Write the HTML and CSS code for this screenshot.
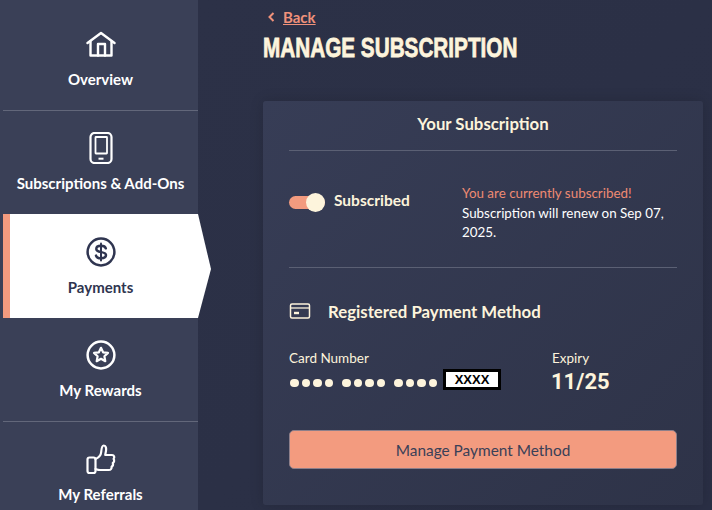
FILE: index.html
```html
<!DOCTYPE html>
<html lang="en">
<head>
    <meta charset="UTF-8">
    <meta name="viewport" content="width=device-width, initial-scale=1.0">
    <title>Manage Subscription</title>
    <link rel="stylesheet" href="styles.css">
</head>
<body>
    <div class="page">
        <nav class="sidebar">
            <a class="nav-item">
                <svg class="nav-icon" viewBox="0 0 30 32" fill="none" stroke="currentColor" stroke-width="2.400" stroke-linejoin="round" stroke-linecap="round">
                    <path d="M1.500 15 15 5l13.500 10"/>
                    <path d="M4.500 13.500V27.500H25.500V13.500"/>
                    <path d="M12 27.500V16H19V27.500"/>
                </svg>
                <span>Overview</span>
            </a>
            <a class="nav-item">
                <svg class="nav-icon" viewBox="0 0 30 32" fill="none" stroke="currentColor" stroke-width="2.200">
                    <rect x="4.500" y="1" width="21" height="30" rx="4"/>
                    <rect x="9.500" y="5" width="11.500" height="16.500" rx="0.500" stroke-width="1.800"/>
                    <path d="M12.500 26.700h5" stroke-width="2"/>
                </svg>
                <span>Subscriptions &amp; Add-Ons</span>
            </a>
            <a class="nav-item nav-item-active">
                <svg class="nav-icon" viewBox="0 0 30 32" fill="none" stroke="currentColor" stroke-width="2.500" stroke-linecap="round">
                    <circle cx="15" cy="16" r="13.400"/>
                    <path d="M19.800 12.300C19.300 10.600 17.300 9.800 15 9.800c-2.700 0-4.700 1.200-4.700 3.200 0 4.500 9.700 1.800 9.700 6.100 0 2-2.100 3.200-4.900 3.200-2.500 0-4.600-.9-5.100-2.700"/>
                    <path d="M15 7.500v17" stroke-width="2"/>
                </svg>
                <span>Payments</span>
            </a>
            <a class="nav-item">
                <svg class="nav-icon" viewBox="0 0 30 32" fill="none" stroke="currentColor" stroke-width="2.500" stroke-linejoin="round">
                    <circle cx="15" cy="16" r="13.400"/>
                    <path d="m15 8.800 2.100 4.500 4.900.6-3.600 3.400.9 4.900-4.300-2.400-4.300 2.400.9-4.900-3.600-3.400 4.900-.6z" stroke-width="2.200"/>
                </svg>
                <span>My Rewards</span>
            </a>
            <a class="nav-item">
                <svg class="nav-icon" viewBox="0 0 30 32" fill="none" stroke="currentColor" stroke-width="2.200" stroke-linejoin="round" stroke-linecap="round">
                    <rect x="1.500" y="14.500" width="8" height="15.500" rx="2"/>
                    <path d="M9.500 16c3.400-1.400 5.400-3.800 5.700-7 .2-2.200.4-6.500 2.600-6.500 2.300 0 2.600 3.200 2.200 5.400l-.8 4.100h6.800c2.300 0 2.800 2.400 1.600 3.900 1 1.400.6 3.400-.8 4.100.5 1.500 0 3-1.200 3.700.3 2-.9 3.300-2.800 3.300H14c-1.800 0-3-.5-4.500-1"/>
                </svg>
                <span>My Referrals</span>
            </a>
        </nav>

        <main class="content">
            <a class="back-link">
                <svg class="back-arrow" viewBox="0 0 7 10" fill="none" stroke="currentColor" stroke-width="2">
                    <path d="M5.500 1 1.500 5l4 4"/>
                </svg>
                <span class="back-text">Back</span>
            </a>
            <h1 class="page-title">MANAGE SUBSCRIPTION</h1>

            <section class="card">
                <h2 class="card-title">Your Subscription</h2>

                <div class="status-row">
                    <div class="status-toggle">
                        <div class="toggle"><div class="toggle-knob"></div></div>
                        <span class="toggle-label">Subscribed</span>
                    </div>
                    <div class="status-text">
                        <p class="status-note">You are currently subscribed!</p>
                        <p>Subscription will renew on Sep 07, 2025.</p>
                    </div>
                </div>

                <div class="method-title">
                    <svg class="card-icon" viewBox="0 0 22 18" fill="none" stroke="currentColor" stroke-width="1.500">
                        <rect x="1.500" y="2" width="19" height="14" rx="1.500"/>
                        <path d="M1.500 6h19" stroke-width="1.300"/>
                        <path d="M5 11h5" stroke-width="2.400"/>
                    </svg>
                    <h3>Registered Payment Method</h3>
                </div>

                <div class="card-details">
                    <div class="card-number">
                        <div class="detail-label">Card Number</div>
                        <div class="number-row">
                            <div class="dots">
                                <span class="dot-group"><i></i><i></i><i></i><i></i></span>
                                <span class="dot-group"><i></i><i></i><i></i><i></i></span>
                                <span class="dot-group"><i></i><i></i><i></i><i></i></span>
                            </div>
                            <div class="last-four">XXXX</div>
                        </div>
                    </div>
                    <div class="card-expiry">
                        <div class="detail-label">Expiry</div>
                        <div class="expiry-value">11/25</div>
                    </div>
                </div>

                <button class="manage-btn">Manage Payment Method</button>
            </section>
        </main>
    </div>
</body>
</html>
```

FILE: styles.css
```css
html, body {
    margin: 0;
    padding: 0;
    height: 510px;
    overflow: hidden;
}

body {
    font-family: "Lato", "Open Sans", sans-serif;
    background: #2b3046;
    color: #fdf4dc;
}

.page {
    display: flex;
    height: 510px;
}

.sidebar {
    width: 195px;
    flex-shrink: 0;
    padding: 7px 0 0 3px;
    background: #3a4057;
    display: flex;
    flex-direction: column;
    box-shadow: 0 0 12px rgba(0, 0, 0, 0.12);
}

.nav-item {
    position: relative;
    height: 103px;
    flex-shrink: 0;
    display: flex;
    flex-direction: column;
    align-items: center;
    color: #fff;
    font-size: 15px;
    font-weight: 700;
    border-bottom: 1px solid #62677a;
}

.nav-item:nth-child(2),
.nav-item-active {
    border-bottom: none;
}

.nav-icon {
    width: 30px;
    height: 32px;
    margin-top: 21px;
    margin-bottom: 10px;
}

.nav-item-active {
    height: 104px;
    color: #2f3550;
    background: #fff;
    box-sizing: border-box;
    border-left: 7px solid #f39b7f;
    padding-right: 7px;
}

.nav-item-active .nav-icon {
    margin-top: 22px;
}

.nav-item-active::after {
    content: "";
    position: absolute;
    top: 0;
    left: 188px;
    width: 13px;
    height: 104px;
    background: #fff;
    clip-path: polygon(0 0, 100% 53%, 0 100%);
}

.content {
    flex: 1;
    padding: 9px 9px 0 65px;
    min-width: 0;
    background: linear-gradient(135deg, #2c3147, #2a2f45);
}

.back-link {
    display: flex;
    align-items: center;
    gap: 8px;
    height: 16px;
    color: #f0917a;
    font-size: 15px;
    font-weight: 700;
    margin-left: 5px;
}

.back-arrow {
    width: 7px;
    height: 10px;
}

.back-text {
    text-decoration: underline;
}

.page-title {
    margin: 8px 0 0;
    height: 68px;
    font-family: "Liberation Sans", sans-serif;
    font-size: 28px;
    line-height: 30px;
    font-weight: 700;
    color: #fdf4dc;
    white-space: nowrap;
    transform: scaleX(0.74);
    transform-origin: left center;
    -webkit-text-stroke: 0.8px #fdf4dc;
}

.card {
    box-sizing: border-box;
    height: 404px;
    padding: 0 26px;
    border-radius: 3px;
    background: linear-gradient(135deg, #373d56, #2e3348);
    box-shadow: 0 0 14px rgba(0, 0, 0, 0.15);
}

.card-title {
    margin: 0;
    height: 49px;
    border-bottom: 1px solid #5b6074;
    font-size: 16.800px;
    font-weight: 700;
    line-height: 45px;
    text-align: center;
}

.status-row {
    display: flex;
    height: 117px;
    border-bottom: 1px solid #5b6074;
    box-sizing: border-box;
    padding-top: 33px;
}

.status-toggle {
    width: 173px;
    display: flex;
    align-items: center;
    gap: 9px;
    height: 36px;
    font-size: 15.500px;
    font-weight: 700;
}

.toggle-label {
    margin-top: -4px;
}

.toggle {
    position: relative;
    width: 36px;
    height: 13px;
    border-radius: 7px;
    background: #f39b7f;
}

.toggle-knob {
    position: absolute;
    right: 0;
    top: -3px;
    width: 19px;
    height: 19px;
    border-radius: 50%;
    background: #fdf4dc;
}

.status-text {
    flex: 1;
    font-size: 13.400px;
    line-height: 19.500px;
    color: #fff;
}

.status-text p {
    margin: 0;
}

.status-note {
    color: #ee8a72;
}

.method-title {
    display: flex;
    align-items: center;
    gap: 17px;
    margin-top: 30px;
    height: 26px;
}

.method-title h3 {
    margin: 0;
    font-size: 16.800px;
    font-weight: 700;
}

.card-icon {
    width: 22px;
    height: 18px;
}

.card-details {
    display: flex;
    margin-top: 26px;
    height: 80px;
}

.card-number {
    width: 263px;
}

.detail-label {
    font-size: 13.500px;
    line-height: 17px;
}

.number-row {
    display: flex;
    align-items: center;
    gap: 6px;
    margin-top: 2px;
}

.dots {
    display: flex;
    gap: 9px;
    margin: 7px 0 0 1px;
}

.dot-group {
    display: flex;
    gap: 3px;
}

.dot-group i {
    display: block;
    width: 8.500px;
    height: 8.500px;
    border-radius: 50%;
    background: #fdf4dc;
}

.last-four {
    box-sizing: border-box;
    width: 58px;
    height: 21px;
    border: 3px solid #000;
    background: #fff;
    color: #000;
    font-family: "Liberation Sans", sans-serif;
    font-size: 13px;
    font-weight: 700;
    line-height: 15px;
    text-align: center;
}

.expiry-value {
    font-family: "Roboto", sans-serif;
    font-size: 22px;
    font-weight: 700;
    line-height: 26px;
    margin: 2px 0 0 -1px;
}

.manage-btn {
    display: block;
    width: 100%;
    height: 39px;
    border: 1px solid #8d7f8a;
    border-radius: 5px;
    background: #f39b7f;
    color: #3a4057;
    font-family: inherit;
    font-size: 15.400px;
}
```
